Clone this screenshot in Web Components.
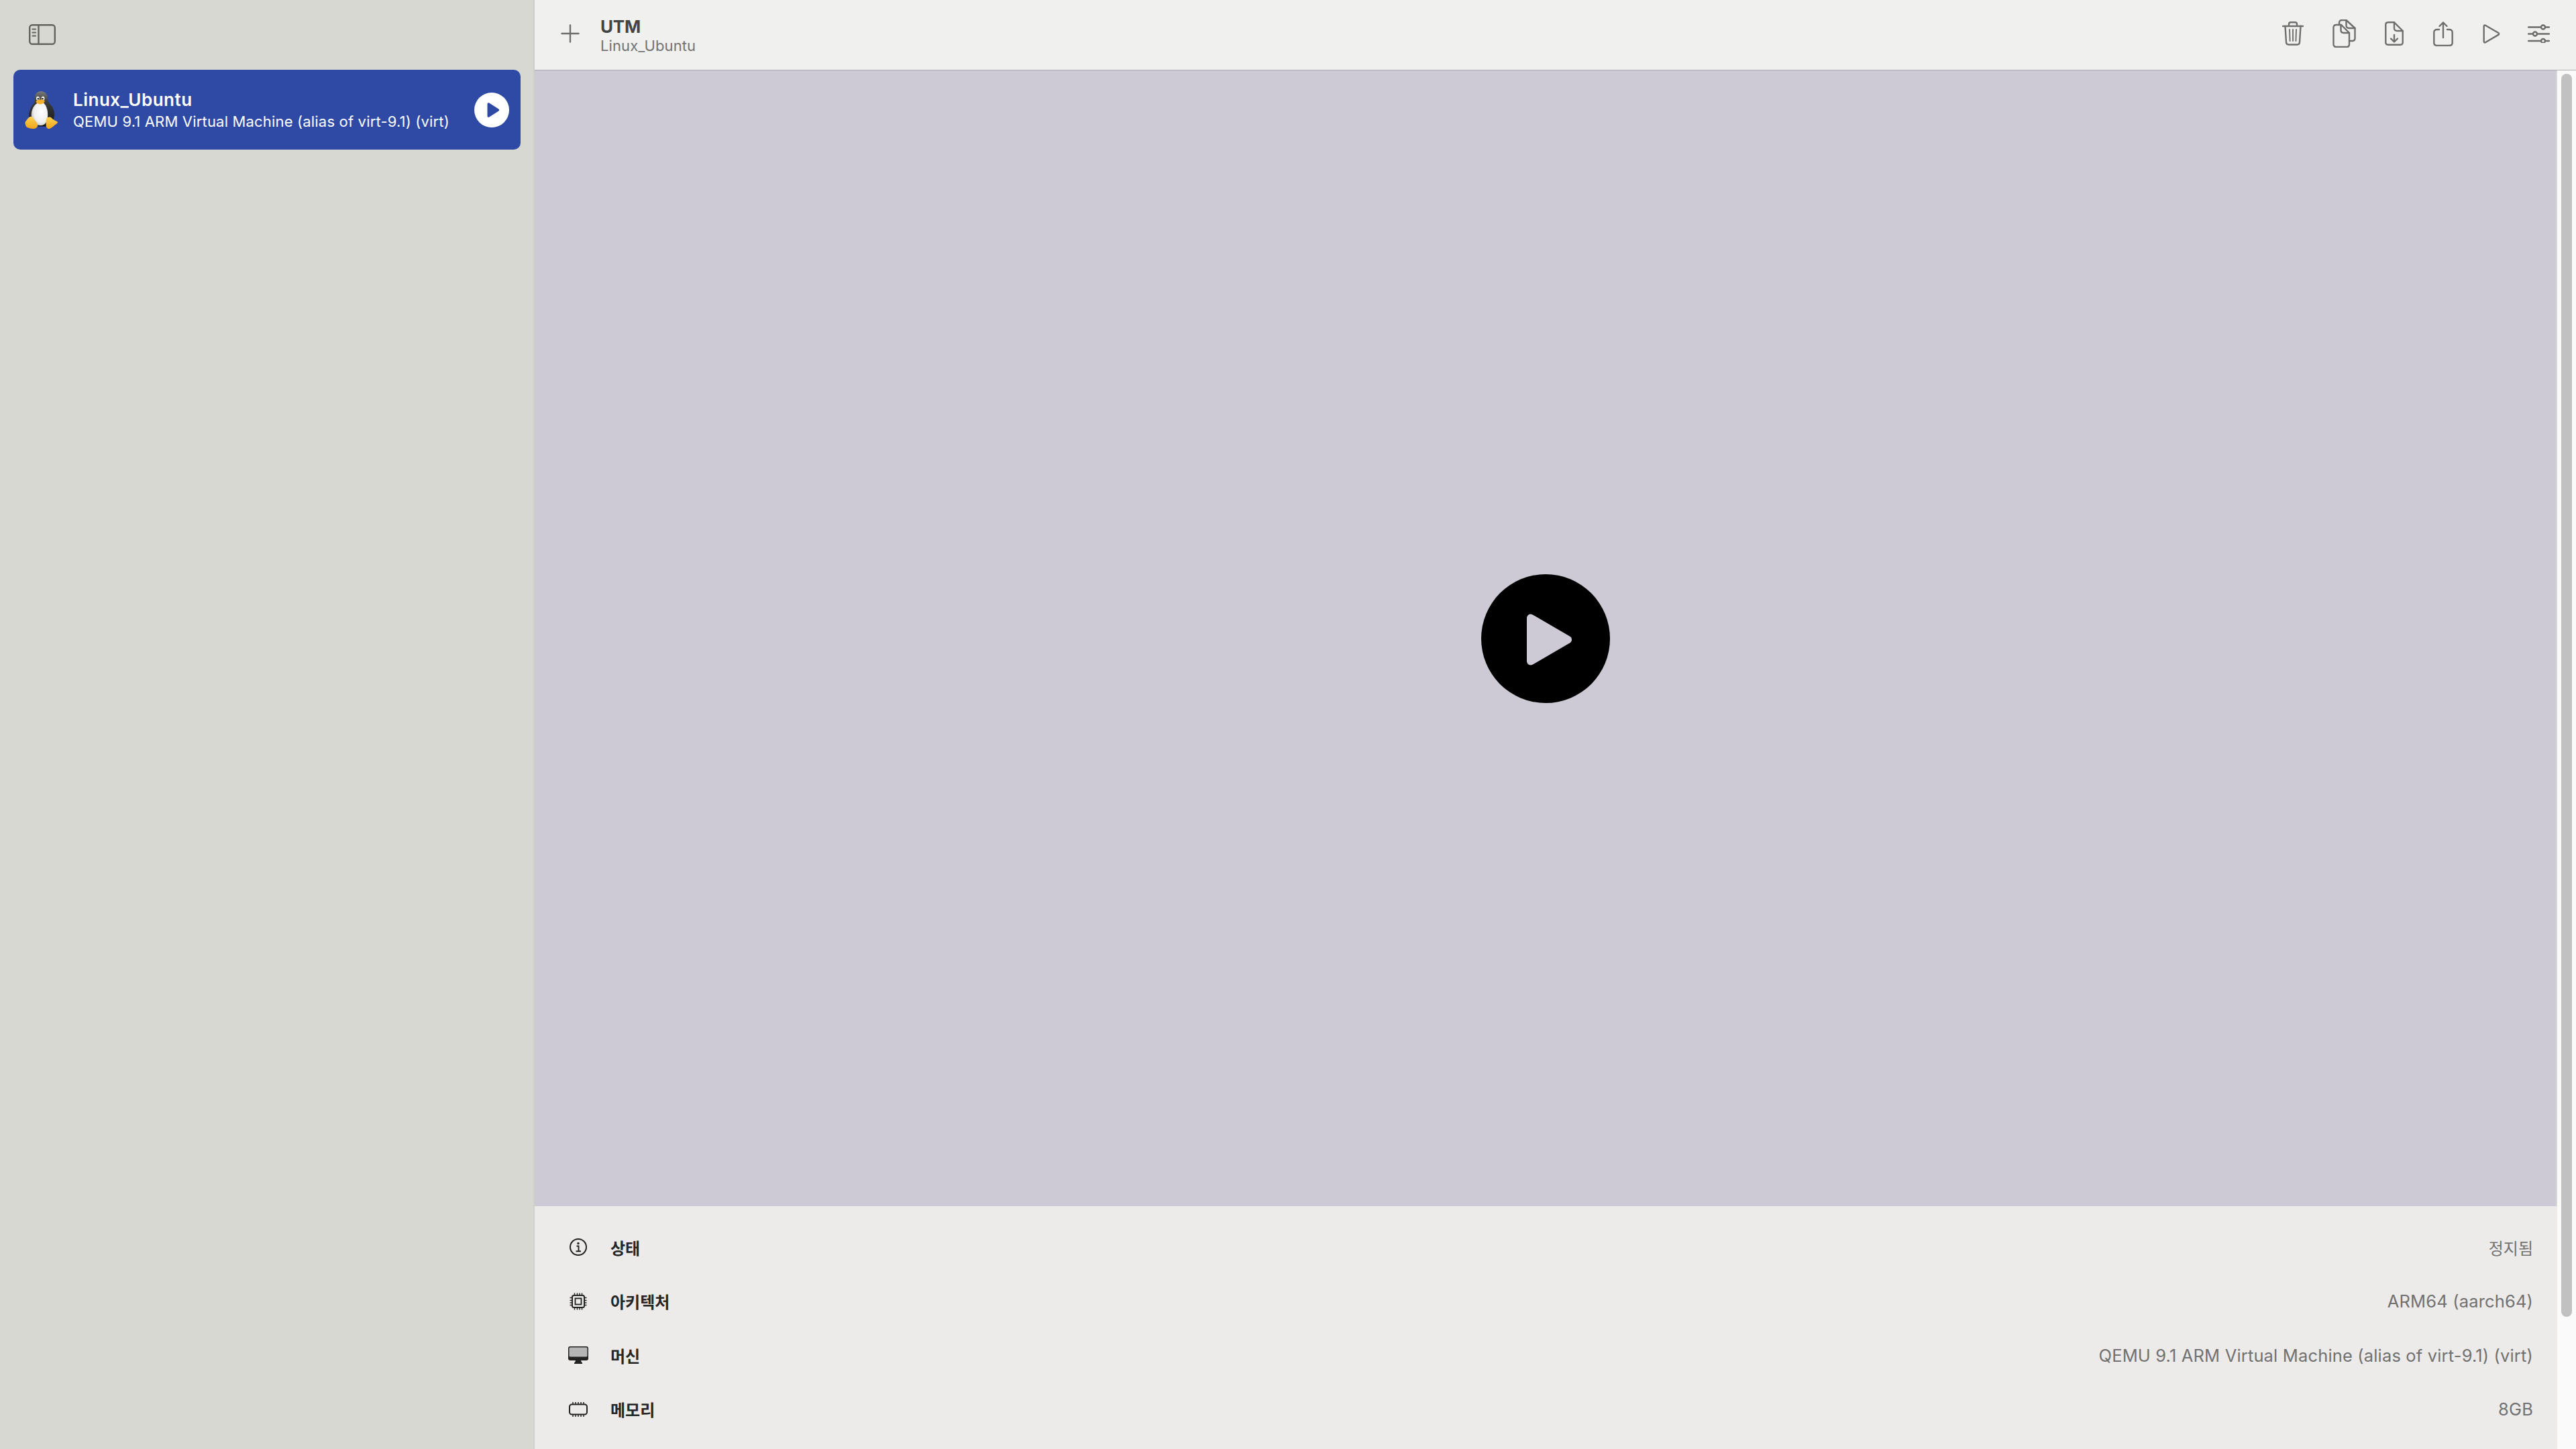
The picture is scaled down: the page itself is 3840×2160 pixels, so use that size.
<!DOCTYPE html>
<html><head><meta charset="utf-8">
<style>
html,body{margin:0;height:100%;overflow:hidden;background:#d7d8d2}
body{font-family:Inter,"Noto Sans CJK KR",sans-serif}
</style></head>
<body>
<utm-app>
  <utm-sidebar slot="side">
    <vm-card name="Linux_Ubuntu" detail="QEMU 9.1 ARM Virtual Machine (alias of virt-9.1) (virt)"></vm-card>
  </utm-sidebar>
  <utm-toolbar slot="bar" title="UTM" subtitle="Linux_Ubuntu"></utm-toolbar>
  <vm-screen slot="screen"></vm-screen>
  <info-panel slot="panel">
    <info-row icon="info" label="상태" value="정지됨" compact></info-row>
    <info-row icon="chip" label="아키텍처" value="ARM64 (aarch64)"></info-row>
    <info-row icon="display" label="머신" value="QEMU 9.1 ARM Virtual Machine (alias of virt-9.1) (virt)"></info-row>
    <info-row icon="memory" label="메모리" value="8GB"></info-row>
  </info-panel>
</utm-app>
<script>
const FONT='Inter,"Noto Sans CJK KR",sans-serif';
function shadow(el,html){el.attachShadow({mode:'open'}).innerHTML=html;}

customElements.define('utm-app',class extends HTMLElement{constructor(){super();shadow(this,`
<style>
:host{display:grid;grid-template-columns:797px 1fr;width:3840px;height:2160px;overflow:hidden}
.side{min-height:0;display:block}
.main{display:flex;flex-direction:column;min-width:0;height:2160px}
.body{flex:1;display:flex;min-height:0}
.content{flex:1;display:flex;flex-direction:column;min-width:0}
.track{width:28px;background:#fafafa;box-sizing:border-box;padding:5px 6px 197px;display:flex}
.thumb{flex:1;background:#c1c1c1;border-radius:8px}
</style>
<div class="side"><slot name="side"></slot></div>
<div class="main">
  <slot name="bar"></slot>
  <div class="body">
    <div class="content"><slot name="screen"></slot><slot name="panel"></slot></div>
    <div class="track"><div class="thumb"></div></div>
  </div>
</div>`);}});

customElements.define('utm-sidebar',class extends HTMLElement{constructor(){super();shadow(this,`
<style>
:host{display:block;height:2160px;box-sizing:border-box;background:#d7d8d2;border-right:2px solid #cfd0ca}
.top{height:104px;display:flex;align-items:center;padding:0 0 2px 43px;box-sizing:border-box}
svg{display:block}
.list{padding:0 19px 0 20px}
</style>
<div class="top"><svg width="40" height="31" viewBox="0 0 40 31" fill="none" stroke="#63635f" stroke-width="2.4">
<rect x="1.2" y="1.2" width="37.6" height="28.6" rx="4"/><path d="M14.5 1.2V29.8"/>
<path d="M5.5 7.5h4.5M5.5 12.5h4.5M5.5 17.5h4.5" stroke-width="2.2" stroke-linecap="round"/></svg></div>
<div class="list"><slot></slot></div>`);}});

customElements.define('vm-card',class extends HTMLElement{constructor(){super();shadow(this,`
<style>
:host{display:flex;align-items:center;height:119px;background:#2e4aa5;border-radius:10px;color:#fff;font-family:${FONT};box-sizing:border-box;padding:0 17px 0 17px}
svg{display:block;flex:none}
.t{flex:1;margin-left:23px;min-width:0;white-space:nowrap}
.n{font-size:26px;font-weight:600;line-height:32px;letter-spacing:.5px}
.d{font-size:22px;line-height:28px;margin-top:2px;letter-spacing:.18px}
</style>
<svg width="49" height="56" viewBox="0 0 48 55">
<defs>
<radialGradient id="b" cx=".62" cy=".42" r=".7"><stop offset="0" stop-color="#fff"/><stop offset=".65" stop-color="#efefef"/><stop offset="1" stop-color="#b5b5b5"/></radialGradient>
<linearGradient id="h" x1="0" y1="0" x2="0" y2="1"><stop offset="0" stop-color="#7a7a7a"/><stop offset=".3" stop-color="#3c3c3c"/><stop offset="1" stop-color="#161616"/></linearGradient>
<linearGradient id="f" x1="0" y1="0" x2="0" y2="1"><stop offset="0" stop-color="#fdd24f"/><stop offset="1" stop-color="#f2a51c"/></linearGradient>
</defs>
<path d="M23.500 0C17 0 14.500 5 14.800 11c.2 5-2.500 7.500-5.300 12C6.500 28.500 5 34 6.500 40l5 11.500h25L42 41c2-6 1.500-13-2-18.500-2.500-4-6.500-6-6.500-11.500C33.500 5 30 0 23.500 0z" fill="url(#h)"/>
<path d="M23 15.500c-7 1-13.500 9-13.500 19 0 9 6 15.500 13.500 15.500s10.500-6.500 10.500-15.500c0-10-4-18.500-10.500-19z" fill="url(#b)"/>
<ellipse cx="19" cy="10.500" rx="2.300" ry="3" fill="#fff"/><ellipse cx="26.500" cy="10.500" rx="2.300" ry="3" fill="#fff"/>
<circle cx="19.500" cy="11" r="1.200" fill="#111"/><circle cx="26" cy="11" r="1.200" fill="#111"/>
<path d="M16.500 14.500c2-2.500 9.500-3 12.500-.5 1 1-2.500 5-6.500 5s-7-3-6-4.500z" fill="#f6b02b"/>
<path d="M.8 44.500C3 42.500 5.500 37 8.700 37c3 0 3.800 3 6.300 6 2 2.500 4.500 5 3.800 7.500C18 53.500 15 55 12.500 55c-3 0-6-1-9-2-2-.7-3.800-6.500-2.700-8.500z" fill="url(#f)"/>
<path d="M32.500 38.500c2-1 5-1.200 6.500.5 2 2.500 6 4 8.300 5.500 1.200 1 .7 2-.5 3-3.500 2.300-7.500 7-11 7.500-3 .3-4.800-2-4.800-6 0-3.500-.5-9 1.500-10.500z" fill="url(#f)"/>
</svg>
<div class="t"><div class="n">${this.getAttribute('name')}</div><div class="d">${this.getAttribute('detail')}</div></div>
<svg width="52" height="52" viewBox="0 0 52 52"><circle cx="26" cy="26" r="26" fill="#fff"/>
<path d="M19.500 17v18c0 1.600 1.500 2.300 2.800 1.500l14-9c1.200-.8 1.200-2.200 0-3l-14-9c-1.300-.8-2.800 0-2.800 1.500z" fill="#2e4aa5"/></svg>`);}});

customElements.define('utm-toolbar',class extends HTMLElement{constructor(){super();shadow(this,`
<style>
:host{display:flex;align-items:center;flex:none;height:105px;box-sizing:border-box;background:#f0f0ee;border-bottom:1px solid #aeadb3;padding:0 39px 4px 39px;font-family:${FONT}}
svg{display:block;flex:none}
.t{margin:5px auto 0 31px;white-space:nowrap}
.a{font-size:26px;font-weight:700;line-height:30px;color:#444;letter-spacing:-.2px}
.b{font-size:22px;line-height:26px;color:#737373;letter-spacing:.1px}
svg{fill:none;stroke:#6e6e6e;stroke-width:2.4;stroke-linecap:round;stroke-linejoin:round}
</style>
<svg width="28" height="28" viewBox="0 0 28 28" stroke-width="2.2"><path d="M14 1.500v25M1.500 14h25"/></svg>
<div class="t"><div class="a">${this.getAttribute('title')}</div><div class="b">${this.getAttribute('subtitle')}</div></div>
<svg width="32" height="36" viewBox="0 0 32 36"><path d="M1 7h30M10 7V4c0-1.600 1-2.700 2.700-2.700h6.600C21 1.300 22 2.400 22 4v3"/><path d="M4.500 7 6 31c.1 2.300 1.500 3.500 3.500 3.500h13c2 0 3.400-1.200 3.500-3.500l1.500-24"/><path d="M11 12l.6 17M16 12v17M21 12l-.6 17" stroke-width="1.900"/></svg>
<svg width="35" height="42" viewBox="0 0 35 42" style="margin-left:43px"><path d="M10 7V5c0-2.500 1.500-4 4-4h6.500L33.500 13v15c0 2.500-1.500 4-4 4H26"/><path d="M20.500 1v8c0 2.500 1.500 4 4 4h9"/><path d="M1.500 12c0-2.500 1.500-4 4-4h7.500L25 20v17c0 2.500-1.500 4-4 4H5.500c-2.500 0-4-1.500-4-4z"/><path d="M12.500 8v8c0 2.500 1.500 4 4 4H25"/></svg>
<svg width="28" height="36" viewBox="0 0 28 36" style="margin-left:43px"><path d="M1.300 5c0-2.500 1.200-3.700 3.700-3.700h9L26.700 14v17c0 2.500-1.200 3.700-3.700 3.700H5c-2.500 0-3.700-1.200-3.700-3.700z"/><path d="M14 1.300V10c0 2.500 1.500 4 4 4h8.700"/><path d="M14 20v10M9 25.500l5 5 5-5"/></svg>
<svg width="30" height="37" viewBox="0 0 30 37" style="margin-left:44px"><path d="M9 12H6c-3 0-4.700 1.500-4.700 4.500v15c0 3 1.700 4.500 4.700 4.500h18c3 0 4.700-1.500 4.700-4.500v-15c0-3-1.700-4.500-4.700-4.500h-3"/><path d="M15 24V1.500M9.500 7 15 1.500 20.500 7"/></svg>
<svg width="26" height="29" viewBox="0 0 26 29" style="margin-left:44px"><path d="M1.700 3.200c0-1.300 1-2 2.200-1.400L23.300 13c1.100.7 1.100 2.200 0 2.900L3.900 27.200c-1.200.6-2.200-.1-2.200-1.400z"/></svg>
<svg width="33" height="28" viewBox="0 0 33 28" style="margin-left:41px"><path d="M1 4.500h19M26 4.500h6M1 14.500h7M14 14.500h18M1 25h19M26 25h6"/><circle cx="23" cy="4.500" r="3"/><circle cx="11" cy="14.500" r="3"/><circle cx="23" cy="25" r="3"/></svg>`);}});

customElements.define('vm-screen',class extends HTMLElement{constructor(){super();shadow(this,`
<style>
:host{display:flex;align-items:center;justify-content:center;height:1693px;width:3013px;background:#cdcad6}
svg{display:block}
</style>
<svg width="192" height="192" viewBox="0 0 192 192"><circle cx="96" cy="96" r="96" fill="#000"/>
<path d="M68 66c0-5.500 4.500-8 9-5.500l55 32c4 2.400 4 7.600 0 10l-55 32c-4.500 2.500-9 0-9-5.500z" fill="#cdcad6"/></svg>`);}});

customElements.define('info-panel',class extends HTMLElement{constructor(){super();shadow(this,`
<style>:host{display:block;flex:1;background:#ecebe9;box-sizing:border-box;padding:21px 36px 0 0;min-height:0;overflow:hidden}</style><slot></slot>`);}});

const ICONS={
info:`<svg width="28" height="28" viewBox="0 0 28 28" fill="none" stroke="#222" stroke-width="2"><circle cx="14" cy="14" r="12"/><path d="M11.500 12.500H14.500V20M10.500 20.300h7.500" stroke-width="1.900"/><circle cx="14" cy="8.500" r="1.700" fill="#222" stroke="none"/></svg>`,
chip:`<svg width="26" height="26" viewBox="0 0 26 26" fill="none" stroke="#222" stroke-width="2"><rect x="4" y="4" width="18" height="18" rx="2.500"/><rect x="8.500" y="8.500" width="9" height="9" stroke-width="1.800"/><path d="M7.500 .5V3M11.500 .5V3M15 .5V3M18.500 .5V3M7.500 23V25.500M11.500 23V25.500M15 23V25.500M18.500 23V25.500M.5 7.500H3M.5 11.500H3M.5 15H3M.5 18.500H3M23 7.500H25.500M23 11.500H25.500M23 15H25.500M23 18.500H25.500" stroke-width="1.400"/></svg>`,
display:`<svg width="30" height="26" viewBox="0 0 30 26"><rect width="30" height="21" rx="3" fill="#222"/><rect x="1.500" y="1.500" width="27" height="14" rx="1.500" fill="#b5b5b5"/><path d="M11 21h8l1 3h1v2H9v-2h1z" fill="#222"/></svg>`,
memory:`<svg width="28" height="22" viewBox="0 0 28 22" fill="none" stroke="#222" stroke-width="2"><rect x="1" y="3.500" width="26" height="15" rx="3.500"/><path d="M6 0v3M10 0v3M14 0v3M18 0v3M22 0v3M6 19v3M10 19v3M14 19v3M18 19v3M22 19v3" stroke-width="1.500"/></svg>`};

customElements.define('info-row',class extends HTMLElement{constructor(){super();shadow(this,`
<style>
:host{display:flex;align-items:center;height:80.5px;font-family:${FONT};font-size:24px;white-space:nowrap}
.i{width:30px;height:30px;margin-left:50px;display:flex;align-items:center;justify-content:center;flex:none}
svg{display:block}
.l{margin-left:33px;font-weight:700;color:#262626;font-size:24px}
.v{margin-left:auto;color:#717171;font-size:${this.hasAttribute('compact')?24:25.5}px;letter-spacing:${this.hasAttribute('compact')?0:.16}px}
</style>
<span class="i">${ICONS[this.getAttribute('icon')]}</span>
<span class="l">${this.getAttribute('label')}</span>
<span class="v">${this.getAttribute('value')}</span>`);}});
</script>
</body></html>
